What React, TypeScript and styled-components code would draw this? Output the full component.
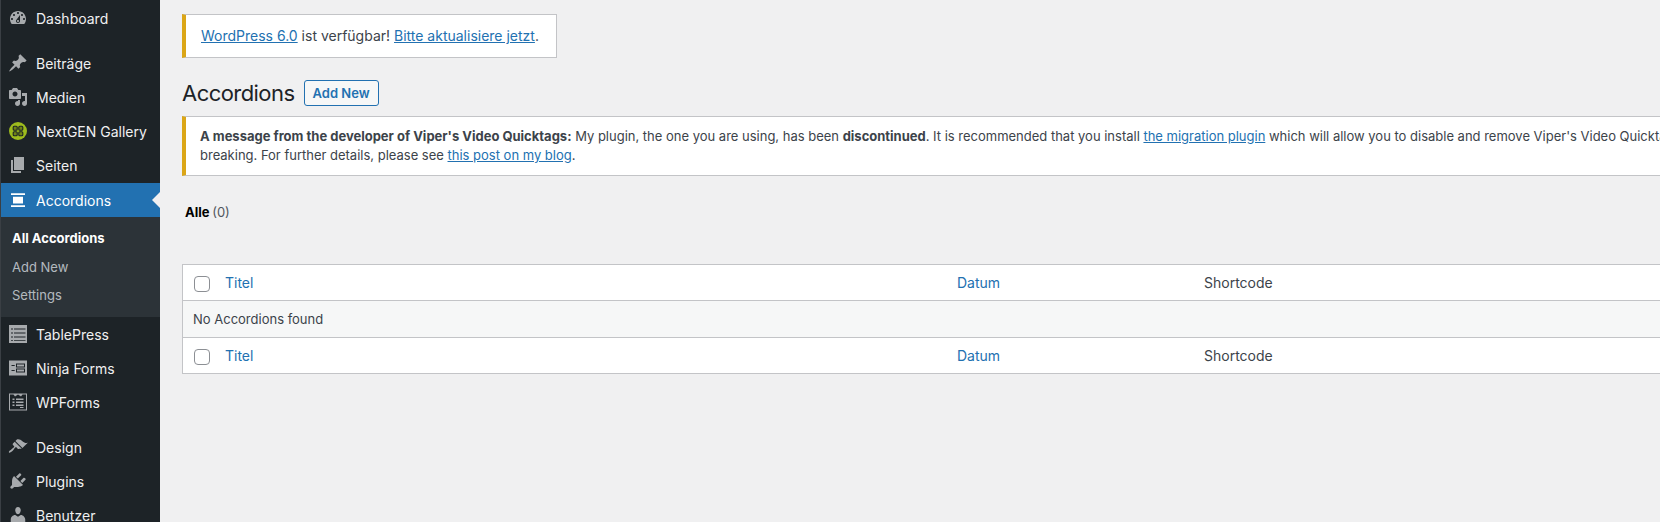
import React from "react";
import styled, { createGlobalStyle } from "styled-components";

const GlobalStyle = createGlobalStyle`
  html, body {
    margin: 0;
    padding: 0;
    height: 100%;
    overflow: hidden;
    background: #f0f0f1;
    font-family: Inter, "Liberation Sans", sans-serif;
    font-size: 13px;
    color: #3c434a;
  }
`;

const Shell = styled.div`
  display: flex;
  width: 1660px;
  height: 522px;
  overflow: hidden;
`;

const Sidebar = styled.nav`
  flex: 0 0 160px;
  box-sizing: border-box;
  height: 522px;
  padding-top: 1px;
  background: #1d2327;
  border-left: 1px solid #3a3f44;
  overflow: hidden;
`;

const MenuGroup = styled.div`
  margin-bottom: 11px;
`;

const MenuItem = styled.a<{ $active?: boolean }>`
  position: relative;
  display: flex;
  align-items: center;
  height: 34px;
  margin-left: -1px;
  margin-top: ${(p) => (p.$active ? "1px" : "0")};
  padding-left: 8px;
  font-size: 14px;
  color: ${(p) => (p.$active ? "#fff" : "#f0f0f1")};
  background: ${(p) => (p.$active ? "#2271b1" : "transparent")};

  svg {
    flex: 0 0 20px;
    width: 20px;
    height: 20px;
    margin-right: 8px;
    fill: ${(p) => (p.$active ? "#fff" : "#a7aaad")};
  }

  ${(p) =>
    p.$active &&
    `
    &::after {
      content: "";
      position: absolute;
      right: 0;
      top: 9px;
      border: 8px solid transparent;
      border-left-width: 0;
      border-right-color: #f0f0f1;
    }
  `}
`;

const SubMenu = styled.div`
  display: flex;
  flex-direction: column;
  height: 100px;
  padding-top: 7px;
  box-sizing: border-box;
  margin-left: -1px;
  background: #2c3338;
`;

const SubItem = styled.a<{ $current?: boolean }>`
  display: flex;
  align-items: center;
  height: 28.5px;
  padding-left: 12px;
  font-size: 13px;
  font-weight: ${(p) => (p.$current ? 700 : 400)};
  color: ${(p) => (p.$current ? "#fff" : "rgba(240, 246, 252, 0.7)")};
`;

const Main = styled.main`
  flex: 1 1 auto;
  min-width: 0;
  padding: 14px 0 0 22px;
  overflow: hidden;
`;

const Notice = styled.div`
  box-sizing: border-box;
  background: #fff;
  border: 1px solid #c3c4c7;
  border-left: 4px solid #dba617;
`;

const UpdateNag = styled(Notice)`
  display: inline-block;
  height: 44px;
  padding: 0 17px 0 15px;
  font-size: 14px;
  line-height: 42px;
  white-space: nowrap;
`;

const Link = styled.a`
  color: #2271b1;
  text-decoration: underline;
`;

const HeadingRow = styled.div`
  display: flex;
  align-items: center;
  gap: 9px;
  height: 26px;
  margin-top: 22px;
`;

const Title = styled.h1`
  margin: 0;
  font-size: 22px;
  font-weight: 400;
  letter-spacing: -0.55px;
  line-height: 26px;
  color: #1d2327;
`;

const AddButton = styled.a`
  box-sizing: border-box;
  height: 26px;
  padding: 0 8px;
  font-size: 13px;
  font-weight: 600;
  line-height: 24px;
  color: #2271b1;
  background: #f6f7f7;
  border: 1px solid #2271b1;
  border-radius: 3px;
`;

const PluginNotice = styled(Notice)`
  width: 1700px;
  height: 60px;
  margin-top: 10px;
  padding: 10px 14px;
  font-size: 13px;
  letter-spacing: -0.006px;
  line-height: 19px;
  white-space: nowrap;

  b {
    font-weight: 700;
  }
`;

const ViewFilter = styled.div`
  height: 20px;
  margin: 26px 0 0 3px;
  font-size: 13px;
  line-height: 20px;
  word-spacing: -1px;
  color: #50575e;

  b {
    font-weight: 700;
    color: #000;
  }
`;

const Table = styled.div`
  box-sizing: border-box;
  width: 1700px;
  margin-top: 42px;
  background: #fff;
  border: 1px solid #c3c4c7;
`;

const Row = styled.div`
  display: grid;
  grid-template-columns: 42px 732px 247px 1fr;
  align-items: center;
  height: 35px;
  font-size: 14px;
`;

const EmptyRow = styled.div`
  box-sizing: border-box;
  height: 38px;
  padding: 0 10px;
  font-size: 13px;
  line-height: 36px;
  background: #f6f7f7;
  border-top: 1px solid #c3c4c7;
  border-bottom: 1px solid #c3c4c7;
`;

const CheckCell = styled.div`
  display: flex;
  padding: 2px 0 0 11px;
`;

const Checkbox = styled.span`
  box-sizing: border-box;
  width: 16px;
  height: 16px;
  background: #fff;
  border: 1px solid #8c8f94;
  border-radius: 4px;
`;

const SortLink = styled.a`
  color: #2271b1;
`;

const HeaderRow = () => (
  <Row>
    <CheckCell>
      <Checkbox />
    </CheckCell>
    <SortLink>Titel</SortLink>
    <SortLink>Datum</SortLink>
    <span>Shortcode</span>
  </Row>
);

const IconDashboard = () => (
  <svg viewBox="0 0 20 20">
    <path fillRule="evenodd" d="M3.76 16h12.48c1.1-1.37 1.76-3.11 1.76-5 0-4.42-3.58-8-8-8s-8 3.58-8 8c0 1.89.66 3.63 1.76 5zM10 4c.55 0 1 .45 1 1s-.45 1-1 1-1-.45-1-1 .45-1 1-1zM6 6c.55 0 1 .45 1 1s-.45 1-1 1-1-.45-1-1 .45-1 1-1zm8 0c.55 0 1 .45 1 1s-.45 1-1 1-1-.45-1-1 .45-1 1-1zm-5.37 5.55L12 7v6c0 1.1-.9 2-2 2s-2-.9-2-2c0-.57.24-1.08.63-1.45zM4 10c.55 0 1 .45 1 1s-.45 1-1 1-1-.45-1-1 .45-1 1-1zm12 0c.55 0 1 .45 1 1s-.45 1-1 1-1-.45-1-1 .45-1 1-1zm-5 3c0-.55-.45-1-1-1s-1 .45-1 1 .45 1 1 1 1-.45 1-1z" />
  </svg>
);

const IconPost = () => (
  <svg viewBox="0 0 20 20">
    <path d="M10.44 3.02l1.82-1.82 6.36 6.35-1.83 1.82c-1.05-.68-2.48-.57-3.41.36l-.75.75c-.92.93-1.04 2.35-.35 3.41l-1.83 1.82-2.41-2.41-2.8 2.79c-.42.42-3.38 2.71-3.8 2.29s1.86-3.39 2.28-3.81l2.79-2.79L4.1 9.36l1.83-1.82c1.05.69 2.48.57 3.4-.36l.75-.75c.93-.92 1.05-2.35.36-3.41z" />
  </svg>
);

const IconMedia = () => (
  <svg viewBox="0 0 20 20">
    <path fillRule="evenodd" d="M13 11V4c0-.55-.45-1-1-1h-1.67L9 1H5L3.67 3H2c-.55 0-1 .45-1 1v7c0 .55.45 1 1 1h10c.55 0 1-.45 1-1zM7 4.5c1.38 0 2.5 1.12 2.5 2.5S8.38 9.5 7 9.5 4.5 8.38 4.5 7 5.62 4.5 7 4.5z" />
    <path d="M14 6h5v10.5c0 1.38-1.12 2.5-2.5 2.5S14 17.88 14 16.5s1.12-2.5 2.5-2.5c.17 0 .34.02.5.05V9h-3V6zm-4 8.05V13h2v3.5c0 1.38-1.12 2.5-2.5 2.5S7 17.88 7 16.5 8.12 14 9.5 14c.17 0 .34.02.5.05z" />
  </svg>
);

const IconGallery = () => (
  <svg viewBox="0 0 20 20">
    <circle cx="10" cy="10" r="9" fill="#9dbb1d" />
    <g fill="#6f8316" stroke="#1d2327" strokeWidth="1.1">
      <rect x="5.2" y="5.2" width="4" height="4" rx="1" />
      <rect x="10.8" y="5.2" width="4" height="4" rx="1" />
      <rect x="5.2" y="10.8" width="4" height="4" rx="1" />
      <rect x="10.8" y="10.8" width="4" height="4" rx="1" />
    </g>
  </svg>
);

const IconPage = () => (
  <svg viewBox="0 0 20 20">
    <path d="M6 15V2h10v13H6zm-1 1h8v2H3V5h2v11z" />
  </svg>
);

const IconAccordion = () => (
  <svg viewBox="0 0 20 20">
    <path d="M3 3.3h14V5H3zM5 6.7h10v6.8H5zM3 15.2h14V17H3z" />
  </svg>
);

const IconTable = () => (
  <svg viewBox="0 0 20 20">
    <path fillRule="evenodd" d="M1 1h18v18H1zM3 4.6v.8h2v-.8zm3 0v.8h11.5v-.8zM3 8.6v.8h2v-.8zm3 0v.8h11.5v-.8zM3 12.6v.8h2v-.8zm3 0v.8h11.5v-.8zM3 16v.8h2V16zm3 0v.8h11.5V16z" />
  </svg>
);

const IconNinja = () => (
  <svg viewBox="0 0 20 20">
    <path fillRule="evenodd" d="M1 2.5h18v15H1zM3.5 7v1h3.2V7zm0 5v1h3.2v-1zM8 5.4V9.6h9V5.4zm1 1h7v2.2H9zM8 10.4v4.2h9v-4.2zm1 1h7v2.2H9z" />
  </svg>
);

const IconWpForms = () => (
  <svg viewBox="0 0 20 20">
    <path fillRule="evenodd" d="M1 1.5h18v17H1zm1 1v15h16v-15h-3.5L13 4.5l-3-2-3 2-1.5-2z" />
    <path d="M4.5 6.5h2V8h-2zM8 6.5h7.5V8H8zM4.5 9.5h2V11h-2zM8 9.5h7.5V11H8zM4.5 12.5h2V14h-2zM8 12.5h7.5V14H8zM12 15h3.5v1H12z" />
  </svg>
);

const IconAppearance = () => (
  <svg viewBox="0 0 20 20">
    <path d="M14.48 11.06L7.41 3.99l1.5-1.5c.5-.56 2.3-.47 3.51.32 1.21.8 1.43 1.28 2.91 2.1 1.18.64 2.45 1.26 4.45.85zm-.71.71L6.7 4.7 4.93 6.47c-.39.39-.39 1.02 0 1.41l1.06 1.06c.39.39.39 1.03 0 1.42-.6.6-1.43 1.11-2.21 1.69-.35.26-.7.53-1.01.84C1.43 13.23.4 14.98 1 15.58c.59.6 2.34-.43 3.68-1.77.31-.31.58-.66.84-1.01.58-.78 1.09-1.61 1.69-2.21.39-.39 1.02-.39 1.41 0l1.06 1.06c.39.39 1.02.39 1.41 0z" />
  </svg>
);

const IconPlugins = () => (
  <svg viewBox="0 0 20 20">
    <path d="M13.11 4.36L9.87 7.6 8 5.73l3.24-3.24c.35-.34 1.05-.2 1.56.32.52.51.66 1.21.31 1.55zm-8 1.77l.91-1.12 9.01 9.01-1.19.84c-.71.71-2.63 1.16-3.82 1.16H6.14L4.9 17.26c-.59.59-1.54.59-2.12 0-.59-.58-.59-1.53 0-2.12l1.24-1.24v-3.88c0-1.13.4-3.19 1.09-3.89zm7.26 3.97l3.24-3.24c.34-.35 1.04-.21 1.55.31.52.51.66 1.21.31 1.55l-3.24 3.25z" />
  </svg>
);

const IconUsers = () => (
  <svg viewBox="0 0 20 20">
    <path d="M10 9.25c-2.27 0-2.73-3.44-2.73-3.44C7 4.02 7.82 2 9.97 2c2.16 0 2.98 2.02 2.71 3.81 0 0-.41 3.44-2.68 3.44zm0 2.57L12.72 10c2.39 0 4.52 2.33 4.52 4.53v2.49s-3.65 1.13-7.24 1.13c-3.65 0-7.24-1.13-7.24-1.13v-2.49c0-2.25 1.94-4.48 4.47-4.48z" />
  </svg>
);

export default function App() {
  return (
    <>
      <GlobalStyle />
      <Shell>
        <Sidebar>
          <MenuGroup>
            <MenuItem>
              <IconDashboard />
              Dashboard
            </MenuItem>
          </MenuGroup>
          <MenuItem>
            <IconPost />
            Beiträge
          </MenuItem>
          <MenuItem>
            <IconMedia />
            Medien
          </MenuItem>
          <MenuItem>
            <IconGallery />
            NextGEN Gallery
          </MenuItem>
          <MenuItem>
            <IconPage />
            Seiten
          </MenuItem>
          <MenuItem $active>
            <IconAccordion />
            Accordions
          </MenuItem>
          <SubMenu>
            <SubItem $current>All Accordions</SubItem>
            <SubItem>Add New</SubItem>
            <SubItem>Settings</SubItem>
          </SubMenu>
          <MenuItem>
            <IconTable />
            TablePress
          </MenuItem>
          <MenuItem>
            <IconNinja />
            Ninja Forms
          </MenuItem>
          <MenuGroup>
            <MenuItem>
              <IconWpForms />
              WPForms
            </MenuItem>
          </MenuGroup>
          <MenuItem>
            <IconAppearance />
            Design
          </MenuItem>
          <MenuItem>
            <IconPlugins />
            Plugins
          </MenuItem>
          <MenuItem>
            <IconUsers />
            Benutzer
          </MenuItem>
        </Sidebar>
        <Main>
          <UpdateNag>
            <Link>WordPress 6.0</Link> ist verfügbar! <Link>Bitte aktualisiere jetzt</Link>.
          </UpdateNag>
          <HeadingRow>
            <Title>Accordions</Title>
            <AddButton>Add New</AddButton>
          </HeadingRow>
          <PluginNotice>
            <b>A message from the developer of Viper's Video Quicktags:</b> My plugin, the one you are using, has been <b>discontinued</b>. It is recommended that you install <Link>the migration plugin</Link> which will allow you to disable and remove Viper's Video Quicktags without anything
            <br />
            breaking. For further details, please see <Link>this post on my blog</Link>.
          </PluginNotice>
          <ViewFilter>
            <b>Alle</b> (0)
          </ViewFilter>
          <Table>
            <HeaderRow />
            <EmptyRow>No Accordions found</EmptyRow>
            <HeaderRow />
          </Table>
        </Main>
      </Shell>
    </>
  );
}
